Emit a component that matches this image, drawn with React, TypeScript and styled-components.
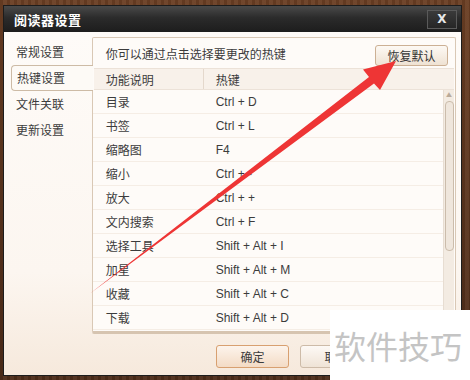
import React, { FC } from 'react'
import styled, { createGlobalStyle, css } from 'styled-components'

const GlobalStyle = createGlobalStyle`
  body {
    margin: 0;
    background: #4a2c1a;
    font-family: "Noto Sans CJK SC", "Liberation Sans", sans-serif;
  }
`

interface HotkeyRow {
  label: string
  keys: string
}

const rows: HotkeyRow[] = [
  { label: '目录', keys: 'Ctrl + D' },
  { label: '书签', keys: 'Ctrl + L' },
  { label: '缩略图', keys: 'F4' },
  { label: '缩小', keys: 'Ctrl + -' },
  { label: '放大', keys: 'Ctrl + +' },
  { label: '文内搜索', keys: 'Ctrl + F' },
  { label: '选择工具', keys: 'Shift + Alt + I' },
  { label: '加星', keys: 'Shift + Alt + M' },
  { label: '收藏', keys: 'Shift + Alt + C' },
  { label: '下载', keys: 'Shift + Alt + D' },
]

const navItems = ['常规设置', '热键设置', '文件关联', '更新设置']

const App: FC = () => (
  <>
    <GlobalStyle />
    <Desk>
      <Window>
        <TitleBar>
          <Title>阅读器设置</Title>
          <CloseButton>X</CloseButton>
        </TitleBar>
        <Body>
          <Main>
            <Nav>
              {navItems.map(item => (
                <NavItem key={item} $active={item === '热键设置'}>
                  {item}
                </NavItem>
              ))}
            </Nav>
            <Panel>
              <PanelHead>
                <Hint>你可以通过点击选择要更改的热键</Hint>
                <SmallButton>恢复默认</SmallButton>
              </PanelHead>
              <TableHead>
                <HeadCell $divider>
                  <HeadText>功能说明</HeadText>
                </HeadCell>
                <HeadCell>
                  <HeadText>热键</HeadText>
                </HeadCell>
              </TableHead>
              <TableBody>
                <Rows>
                  {rows.map(row => (
                    <Row key={row.label}>
                      <LabelCell>{row.label}</LabelCell>
                      <KeyCell>{row.keys}</KeyCell>
                    </Row>
                  ))}
                </Rows>
                <ScrollBar>
                  <ScrollArrow>▲</ScrollArrow>
                  <ScrollThumb />
                </ScrollBar>
              </TableBody>
            </Panel>
          </Main>
          <Footer>
            <DialogButton $primary>确定</DialogButton>
            <DialogButton>取消</DialogButton>
          </Footer>
        </Body>
      </Window>
      <Arrow width="470" height="380" viewBox="0 0 470 380">
        <polygon
          points="90,293.5 369,77 363,69.5 396,61 380,90 374,83.5"
          fill="#ee3535"
        />
      </Arrow>
      <Watermark>软件技巧</Watermark>
    </Desk>
  </>
)

export default App

const Desk = styled.div`
  position: relative;
  width: 470px;
  height: 380px;
  box-sizing: border-box;
  padding: 5px 8px 4px 3px;
  overflow: hidden;
  background: repeating-linear-gradient(
      90deg,
      rgba(0, 0, 0, 0.08) 0 3px,
      rgba(255, 255, 255, 0.04) 3px 7px
    ),
    linear-gradient(180deg, #6b3f24, #4d2c19);
`

const Window = styled.div`
  display: flex;
  flex-direction: column;
  height: 100%;
  border: 1px solid #1c1c1c;
  box-sizing: border-box;
`

const TitleBar = styled.div`
  display: flex;
  align-items: center;
  justify-content: space-between;
  height: 26px;
  padding: 0 4px 0 10px;
  background: linear-gradient(180deg, #4a4a4a 0%, #2b2b2b 45%, #1d1d1d 100%);
`

const Title = styled.div`
  color: #ffffff;
  font-size: 13px;
  font-weight: 700;
  letter-spacing: 0.5px;
`

const CloseButton = styled.div`
  width: 30px;
  height: 19px;
  box-sizing: border-box;
  border: 1px solid #5a5a5a;
  background: linear-gradient(180deg, #3a3a3a, #262626);
  color: #e8e8e8;
  font-family: "DejaVu Sans", sans-serif;
  font-size: 12px;
  font-weight: 700;
  display: flex;
  align-items: center;
  justify-content: center;
`

const Body = styled.div`
  flex: 1;
  display: flex;
  flex-direction: column;
  padding: 5px 5px 0 7px;
  background: linear-gradient(180deg, #fefbf8 0%, #fcf6f0 70%, #f6e9dc 100%);
`

const Main = styled.div`
  display: flex;
`

const Nav = styled.div`
  display: flex;
  flex-direction: column;
  width: 81px;
  padding-top: 2px;
  position: relative;
  z-index: 1;
`

const NavItem = styled.div<{ $active?: boolean }>`
  height: 26px;
  line-height: 26px;
  padding-left: 5px;
  font-size: 12px;
  color: #3c3c3c;
  box-sizing: border-box;
  ${({ $active }) =>
    $active &&
    css`
      margin-right: -1px;
      border: 1px solid #cdbba6;
      border-right: none;
      border-radius: 4px 0 0 4px;
      background: #fdfaf6;
      line-height: 24px;
    `}
`

const Panel = styled.div`
  width: 366px;
  height: 297px;
  box-sizing: border-box;
  border: 1px solid #d9c8b5;
  border-bottom: 3px solid #d6c4b0;
  border-radius: 2px;
  background: #fefbf8;
  display: flex;
  flex-direction: column;
`

const PanelHead = styled.div`
  display: flex;
  align-items: center;
  justify-content: space-between;
  height: 30px;
  padding: 0 7px 0 13px;
`

const Hint = styled.div`
  font-size: 12px;
  color: #3c3c3c;
`

const SmallButton = styled.div`
  width: 73px;
  height: 21px;
  box-sizing: border-box;
  border: 1px solid #ccb094;
  border-radius: 3px;
  background: linear-gradient(180deg, #fdf9f4, #efe2d3);
  font-size: 12px;
  color: #333;
  display: flex;
  align-items: center;
  justify-content: center;
  margin-top: 4px;
`

const TableHead = styled.div`
  display: grid;
  grid-template-columns: 110px 1fr;
  height: 22px;
  margin: 0 1px;
  box-sizing: border-box;
  background: #f8f1ea;
  border-top: 1px solid #ece2d8;
  border-bottom: 1px solid #ece2d8;
  font-size: 12px;
  color: #3c3c3c;
`

const HeadCell = styled.div<{ $divider?: boolean }>`
  display: flex;
  align-items: center;
  border-right: ${({ $divider }) => ($divider ? '1px solid #e4d8cc' : 'none')};
`

const HeadText = styled.span`
  margin-left: 12px;
`

const TableBody = styled.div`
  flex: 1;
  display: flex;
  min-height: 0;
`

const Rows = styled.div`
  flex: 1;
  display: flex;
  flex-direction: column;
`

const Row = styled.div`
  display: flex;
  align-items: center;
  height: 24px;
  border-bottom: 1px solid #f5ede5;
  box-sizing: border-box;
`

const LabelCell = styled.div`
  width: 123px;
  padding-left: 13px;
  box-sizing: border-box;
  font-size: 12px;
  color: #3c3c3c;
`

const KeyCell = styled.div`
  font-family: "Liberation Sans", sans-serif;
  font-size: 12px;
  color: #3c3c3c;
`

const ScrollBar = styled.div`
  width: 10px;
  margin-right: 1px;
  background: #f3ebe2;
  border-left: 1px solid #e7ddd2;
  display: flex;
  flex-direction: column;
  align-items: center;
`

const ScrollArrow = styled.div`
  font-size: 6px;
  color: #b9aa99;
  line-height: 10px;
  height: 10px;
`

const ScrollThumb = styled.div`
  width: 7px;
  height: 148px;
  margin-top: 1px;
  border: 1px solid #cbbcab;
  border-radius: 4px;
  background: #efe6dc;
`

const Footer = styled.div`
  display: flex;
  padding: 11px 0 0 205px;
  gap: 11px;
`

const DialogButton = styled.div<{ $primary?: boolean }>`
  width: 73px;
  height: 23px;
  box-sizing: border-box;
  border-radius: 3px;
  display: flex;
  align-items: center;
  justify-content: center;
  font-size: 12px;
  color: #3c3c3c;
  ${({ $primary }) =>
    $primary
      ? css`
          border: 1px solid #d8a070;
          background: linear-gradient(180deg, #fdf4ec, #f3dbc5);
        `
      : css`
          border: 1px solid #cdbba8;
          background: linear-gradient(180deg, #fdf9f5, #efe3d6);
        `}
`

const Arrow = styled.svg`
  position: absolute;
  left: 0;
  top: 0;
  pointer-events: none;
`

const Watermark = styled.div`
  position: absolute;
  left: 330px;
  top: 310px;
  width: 140px;
  height: 70px;
  background: #ffffff;
  color: #c4c4c4;
  font-size: 32px;
  line-height: 70px;
  padding-left: 4px;
  box-sizing: border-box;
  white-space: nowrap;
`
